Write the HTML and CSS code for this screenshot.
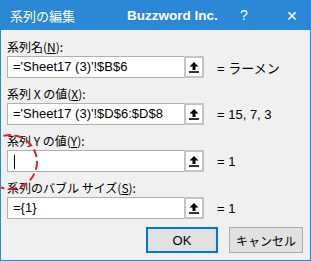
FILE: index.html
```html
<!DOCTYPE html>
<html lang="ja">
<head>
<meta charset="utf-8">
<link rel="stylesheet" href="styles.css">
</head>
<body>
<div class="window">
  <div class="titlebar">
    <span class="title">系列の編集</span>
    <span class="brand">Buzzword Inc.</span>
    <span class="help">?</span>
    <span class="close">✕</span>
  </div>
  <div class="body">
    <div class="field">
      <div class="label">系列名(<u>N</u>):</div>
      <div class="row">
        <div class="input">='Sheet17 (3)'!$B$6</div>
        <div class="pick"><svg width="12" height="12" viewBox="0 0 12 12"><path d="M6 1 L10.5 5.5 H7.5 V9 H4.5 V5.5 H1.5 Z" fill="#000"/><rect x="1" y="10.2" width="10" height="1.6" fill="#000"/></svg></div>
        <div class="value">= ラーメン</div>
      </div>
    </div>
    <div class="field">
      <div class="label">系列 X の値(<u>X</u>):</div>
      <div class="row">
        <div class="input">='Sheet17 (3)'!$D$6:$D$8</div>
        <div class="pick"><svg width="12" height="12" viewBox="0 0 12 12"><path d="M6 1 L10.5 5.5 H7.5 V9 H4.5 V5.5 H1.5 Z" fill="#000"/><rect x="1" y="10.2" width="10" height="1.6" fill="#000"/></svg></div>
        <div class="value">= 15, 7, 3</div>
      </div>
    </div>
    <div class="field">
      <div class="label">系列 Y の値(<u>Y</u>):</div>
      <div class="row">
        <div class="input"><span class="caret"></span></div>
        <div class="pick"><svg width="12" height="12" viewBox="0 0 12 12"><path d="M6 1 L10.5 5.5 H7.5 V9 H4.5 V5.5 H1.5 Z" fill="#000"/><rect x="1" y="10.2" width="10" height="1.6" fill="#000"/></svg></div>
        <div class="value">= 1</div>
      </div>
    </div>
    <div class="field">
      <div class="label">系列のバブル サイズ(<u>S</u>):</div>
      <div class="row">
        <div class="input">={1}</div>
        <div class="pick"><svg width="12" height="12" viewBox="0 0 12 12"><path d="M6 1 L10.5 5.5 H7.5 V9 H4.5 V5.5 H1.5 Z" fill="#000"/><rect x="1" y="10.2" width="10" height="1.6" fill="#000"/></svg></div>
        <div class="value">= 1</div>
      </div>
    </div>
    <div class="buttons">
      <div class="btn ok">OK</div>
      <div class="btn">キャンセル</div>
    </div>
    <svg class="mark" width="80" height="70" viewBox="0 0 80 70"><circle cx="30" cy="35" r="27" fill="none" stroke="#d8262c" stroke-width="2" stroke-dasharray="8 4"/></svg>
  </div>
</div>
</body>
</html>
```
FILE: styles.css
```css
* { box-sizing: border-box; }
html, body { margin: 0; padding: 0; background: #f0f0f0; }
body {
  width: 311px; height: 261px; overflow: hidden;
  font-family: "Noto Sans CJK JP", "Noto Sans", sans-serif;
  font-size: 12px; color: #000;
}
.window { width: 311px; height: 261px; display: flex; flex-direction: column; }
.titlebar {
  height: 30px; background: #2b88d6; color: #fff;
  display: flex; align-items: center; padding-left: 10px; flex: none;
  white-space: nowrap;
}
.titlebar span { flex: none; overflow: hidden; }
.title { font-size: 13px; width: 117px; }
.brand { font-family: "Liberation Sans", sans-serif; font-weight: 700; font-size: 13.5px; width: 113px; }
.help { font-family: "Liberation Sans", sans-serif; font-size: 14px; width: 46px; }
.close { font-size: 14px; }
.body {
  position: relative; flex: 1;
  border: 1px solid #2b88d6; border-top: none;
  padding: 8px 0 0 6px;
  overflow: hidden;
}
.field { height: 47px; }
.label { height: 18px; line-height: 18px; }
.label u { text-decoration: underline; }
.row { display: flex; align-items: center; height: 22px; }
.input {
  width: 177px; height: 22px; background: #fff;
  border: 1px solid #b0b0b0; border-right: none;
  font-family: "Liberation Sans", sans-serif; font-size: 13px;
  padding-left: 5px; line-height: 20px; white-space: nowrap; overflow: hidden;
}
.caret { display: inline-block; width: 1px; height: 14px; background: #000; vertical-align: middle; margin-left: 1px; }
.pick {
  width: 20px; height: 22px; background: #fff;
  border: 2px solid #c4c4c4; display: flex; align-items: center; justify-content: center;
}
.value { margin-left: 13px; font-family: "Liberation Sans", "Noto Sans CJK JP", sans-serif; font-size: 13px; }
.buttons { display: flex; gap: 11px; margin-left: 139px; margin-top: 1px; }
.btn {
  width: 74px; height: 26px; background: #e1e1e1; border: 1px solid #adadad;
  display: flex; align-items: center; justify-content: center; font-size: 12px;
}
.btn.ok { width: 72px; border: 2px solid #0078d7; font-family: "Liberation Sans", sans-serif; font-size: 13px; }
.mark { position: absolute; left: -21px; top: 97px; }
```
